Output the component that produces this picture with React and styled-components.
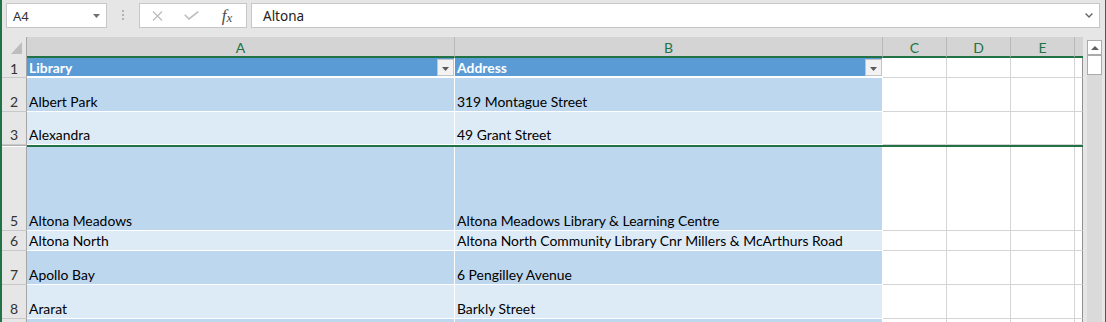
import React from "react";
import styled, { createGlobalStyle } from "styled-components";

const GREEN = "#217346";
const COLS = "25px 428px 428px 64px 64px 64px 8px";

const rows = [
  { n: 1, h: 20, kind: "head", a: "Library", b: "Address" },
  { n: 2, h: 34, kind: "b1", a: "Albert Park", b: "319 Montague Street" },
  { n: 3, h: 33, kind: "b2", a: "Alexandra", b: "49 Grant Street" },
  { freeze: true },
  { n: 5, h: 84, kind: "b1", a: "Altona Meadows", b: "Altona Meadows Library & Learning Centre" },
  { n: 6, h: 20, kind: "b2", a: "Altona North", b: "Altona North Community Library Cnr Millers & McArthurs Road" },
  { n: 7, h: 34, kind: "b1", a: "Apollo Bay", b: "6 Pengilley Avenue" },
  { n: 8, h: 34, kind: "b2", a: "Ararat", b: "Barkly Street" },
  // row 9 only peeks in at the bottom edge
  { n: "", h: 34, kind: "b1", a: "", b: "" },
];

const GlobalStyle = createGlobalStyle`
  html, body {
    margin: 0;
    padding: 0;
    background: #e6e6e6;
    overflow: hidden;
  }
`;

const Window = styled.div`
  width: 1106px;
  height: 322px;
  box-sizing: border-box;
  border-left: 2px solid ${GREEN};
  border-right: 1px solid ${GREEN};
  background: #e6e6e6;
  overflow: hidden;
  font-family: Lato, "Liberation Sans", sans-serif;
`;

const FormulaBar = styled.div`
  height: 37px;
  box-sizing: border-box;
  padding: 3px 5px 0 4px;
  display: flex;
  align-items: flex-start;
  font-family: "Noto Sans", "Open Sans", sans-serif;
`;

const Box = styled.div`
  height: 25px;
  box-sizing: border-box;
  border: 1px solid #c6c6c6;
  background: #fff;
  display: flex;
  align-items: center;
`;

const NameBox = styled(Box)`
  width: 101px;
  justify-content: space-between;
  padding: 0 6px 0 6px;
  font-size: 13px;
  color: #333;
`;

const Grip = styled.div`
  width: 32px;
  padding-top: 7px;
  display: flex;
  flex-direction: column;
  align-items: center;
  gap: 2px;
  span {
    width: 2px;
    height: 2px;
    background: #b3b3b3;
  }
`;

const IconBox = styled(Box)`
  width: 108px;
`;

const IconSlot = styled.div`
  width: ${(p) => (p.$w ? p.$w + "px" : "auto")};
  flex: ${(p) => (p.$w ? "none" : 1)};
  display: flex;
  justify-content: center;
  align-items: center;
`;

const Fx = styled.span`
  font-family: "Liberation Serif", serif;
  font-style: italic;
  font-size: 17px;
  color: #4d4d4d;
  small {
    font-size: 13px;
    position: relative;
    top: 1px;
  }
`;

const FormulaInput = styled(Box)`
  flex: 1;
  margin-left: 4px;
  padding: 0 6px 0 11px;
  justify-content: space-between;
  font-size: 13.5px;
  color: #222;
`;

const Sheet = styled.div`
  display: flex;
`;

const Grid = styled.div`
  width: 1081px;
  display: flex;
  flex-direction: column;
`;

const Row = styled.div`
  display: grid;
  grid-template-columns: ${COLS};
  height: ${(p) => p.$h}px;
  flex: none;
`;

const Corner = styled.div`
  background: #e6e6e6;
  border-right: 1px solid #a6a6a6;
  display: flex;
  justify-content: flex-end;
  align-items: flex-end;
  padding: 0 4px 4px 0;
`;

const ColHead = styled.div`
  background: #d4d4d4;
  border-right: ${(p) => (p.$edge ? "none" : "1px solid #b9b9b9")};
  border-bottom: 2px solid ${GREEN};
  display: flex;
  justify-content: center;
  align-items: center;
  padding-top: 2px;
  color: ${GREEN};
  font-size: 14px;
`;

const RowHead = styled.div`
  background: #e6e6e6;
  border-right: 1px solid #a6a6a6;
  border-bottom: 1px solid #c8c8c8;
  display: flex;
  justify-content: center;
  align-items: flex-end;
  padding-bottom: ${(p) => (p.$head ? 0 : 1)}px;
  line-height: 16px;
  font-size: 14px;
  color: #333;
`;

const cellBg = {
  head: "#5b9bd5",
  b1: "#bdd7ee",
  b2: "#ddebf7",
  blank: "#fff",
  edge: "#fff",
};

const Cell = styled.div`
  background: ${(p) => cellBg[p.$kind]};
  border-right: 1px solid
    ${(p) => (p.$kind === "edge" ? "#8f8f8f" : p.$kind === "blank" ? "#d4d4d4" : "#fff")};
  border-bottom: ${(p) => (p.$kind === "head" ? "2px" : "1px")} solid
    ${(p) => (p.$kind === "blank" || p.$kind === "edge" ? "#d4d4d4" : "#fff")};
  display: flex;
  align-items: flex-end;
  justify-content: space-between;
  padding: 0 0 ${(p) => (p.$kind === "head" ? 0 : 1)}px 2px;
  line-height: 16px;
  font-size: 13.9px;
  font-weight: ${(p) => (p.$kind === "head" ? 700 : 400)};
  color: ${(p) => (p.$kind === "head" ? "#fff" : "#000")};
  white-space: nowrap;
  overflow: hidden;
`;

const FilterButton = styled.div`
  width: 17px;
  align-self: stretch;
  margin-top: 1px;
  box-sizing: border-box;
  border: 1px solid #c4c4c4;
  background: #f2f2f2;
  display: flex;
  justify-content: center;
  align-items: center;
  padding-top: 2px;
`;

const FreezeHead = styled.div`
  background: #fff;
  border-top: 1px solid #b0b0b0;
  border-right: 1px solid #a6a6a6;
`;

const FreezeLine = styled.div`
  grid-column: 2 / -1;
  background: ${GREEN};
`;

const ScrollBar = styled.div`
  width: 22px;
  box-sizing: border-box;
  padding: 3px 3px 0 4px;
  background: #e6e6e6;
  display: flex;
`;

const Track = styled.div`
  flex: 1;
  height: 300px;
  background: #dadada;
  display: flex;
  flex-direction: column;
`;

const ScrollPart = styled.div`
  height: ${(p) => p.$h}px;
  box-sizing: border-box;
  border: 1px solid #ababab;
  background: #fff;
  display: flex;
  justify-content: center;
  align-items: center;
`;

const Triangle = ({ w = 7, h = 4, up, color = "#5a5a5a" }) => (
  <svg width={w} height={h} viewBox={`0 0 ${w} ${h}`}>
    <polygon points={up ? `0,${h} ${w / 2},0 ${w},${h}` : `0,0 ${w},0 ${w / 2},${h}`} fill={color} />
  </svg>
);

const DataRow = ({ row }) => (
  <Row $h={row.h}>
    <RowHead $head={row.kind === "head"}>{row.n}</RowHead>
    <Cell $kind={row.kind}>
      <span>{row.a}</span>
      {row.kind === "head" && (
        <FilterButton>
          <Triangle />
        </FilterButton>
      )}
    </Cell>
    <Cell $kind={row.kind}>
      <span>{row.b}</span>
      {row.kind === "head" && (
        <FilterButton>
          <Triangle />
        </FilterButton>
      )}
    </Cell>
    <Cell $kind="blank" />
    <Cell $kind="blank" />
    <Cell $kind="blank" />
    <Cell $kind="edge" />
  </Row>
);

export default function App() {
  return (
    <Window>
      <GlobalStyle />
      <FormulaBar>
        <NameBox>
          <span>A4</span>
          <Triangle w={7} h={4} color="#707070" />
        </NameBox>
        <Grip>
          <span />
          <span />
          <span />
        </Grip>
        <IconBox>
          <IconSlot $w={34}>
            <svg width="11" height="10" viewBox="0 0 11 10">
              <path d="M1 0.5 L10 9.5 M10 0.5 L1 9.5" stroke="#bdbdbd" strokeWidth="1.3" fill="none" />
            </svg>
          </IconSlot>
          <IconSlot $w={34}>
            <svg width="15" height="9" viewBox="0 0 15 9">
              <polyline points="0.7,3.8 5,8 14.3,0.7" stroke="#bdbdbd" strokeWidth="1.6" fill="none" />
            </svg>
          </IconSlot>
          <IconSlot>
            <Fx>
              f<small>x</small>
            </Fx>
          </IconSlot>
        </IconBox>
        <FormulaInput>
          <span>Altona</span>
          <svg width="8" height="5" viewBox="0 0 8 5">
            <polyline points="0.6,0.6 4,4 7.4,0.6" stroke="#666" strokeWidth="1.4" fill="none" />
          </svg>
        </FormulaInput>
      </FormulaBar>
      <Sheet>
        <Grid>
          <Row $h={21}>
            <Corner>
              <svg width="11" height="12" viewBox="0 0 11 12">
                <polygon points="11,0 11,12 0,12" fill="#bdbdbd" />
              </svg>
            </Corner>
            <ColHead>A</ColHead>
            <ColHead>B</ColHead>
            <ColHead>C</ColHead>
            <ColHead>D</ColHead>
            <ColHead>E</ColHead>
            <ColHead $edge />
          </Row>
          {rows.map((row, i) =>
            row.freeze ? (
              <Row key={i} $h={2}>
                <FreezeHead />
                <FreezeLine />
              </Row>
            ) : (
              <DataRow key={i} row={row} />
            )
          )}
        </Grid>
        <ScrollBar>
          <Track>
            <ScrollPart $h={15}>
              <Triangle w={8} h={4} up color="#606060" />
            </ScrollPart>
            <ScrollPart $h={20} />
          </Track>
        </ScrollBar>
      </Sheet>
    </Window>
  );
}
